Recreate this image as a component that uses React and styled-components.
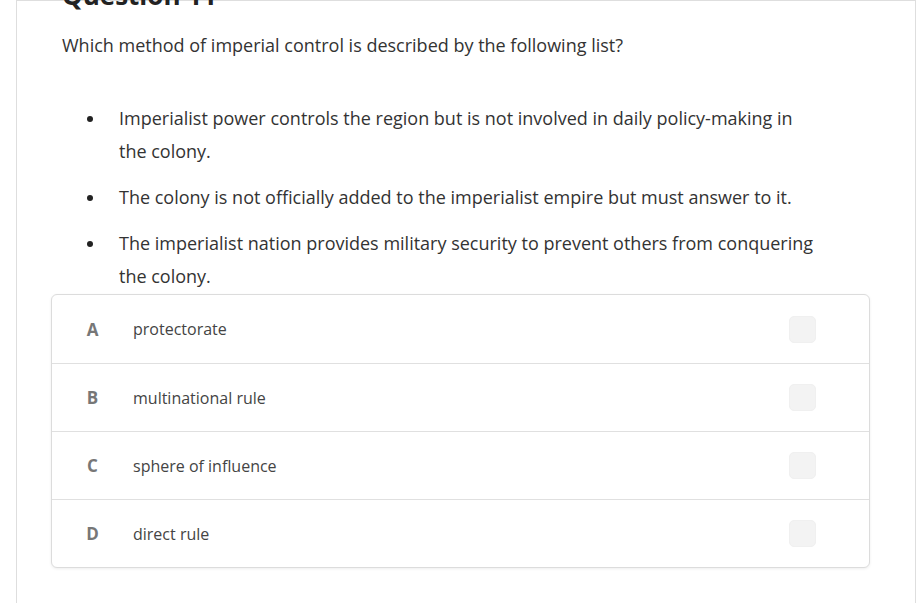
import React from "react";
import styled, { createGlobalStyle } from "styled-components";

const Global = createGlobalStyle`
  html, body { margin: 0; padding: 0; background: #fff; overflow: hidden; }
  body { font-family: "Open Sans", "Noto Sans", sans-serif; color: #333; }
  * { box-sizing: border-box; }
`;

const Page = styled.div`
  padding-left: 16px;
  height: 603px;
  overflow: hidden;
`;

const Card = styled.div`
  width: 900px;
  border: 1px solid #dedede;
  border-bottom: none;
  background: #fff;
  padding: 0 0 80px 0;
`;

const Heading = styled.h2`
  margin: -22px 0 0 45px;
  font-size: 26px;
  line-height: 32px;
  font-weight: 700;
  color: #222;
`;

const Prompt = styled.p`
  margin: 21px 0 0 45px;
  font-size: 18px;
  line-height: 26px;
  color: #333;
`;

const List = styled.ul`
  list-style: none;
  margin: 44px 0 0 45px;
  padding: 0;
  width: 758px;
`;

const Item = styled.li`
  display: flex;
  font-size: 18px;
  line-height: 33px;
  color: #333;
  margin-bottom: 13px;
  &:last-child { margin-bottom: 0; }
`;

const Bullet = styled.span`
  flex: 0 0 57px;
  position: relative;
  &::before {
    content: "";
    position: absolute;
    left: 25px;
    top: 14px;
    width: 6px;
    height: 6px;
    border-radius: 50%;
    background: #222;
  }
`;

const ItemText = styled.span`
  flex: 1;
`;

const Options = styled.div`
  margin: 1px 0 0 34px;
  width: 819px;
  border: 1px solid #dcdcdc;
  border-radius: 6px;
  box-shadow: 0 1px 3px rgba(0, 0, 0, 0.07);
  background: #fff;
`;

const Row = styled.div`
  display: flex;
  align-items: center;
  height: 68px;
  border-top: ${(p) => (p.$first ? "none" : "1px solid #e0e0e0")};
`;

const Letter = styled.span`
  flex: 0 0 81px;
  text-align: center;
  font-weight: 700;
  font-size: 17px;
  color: #777;
`;

const Label = styled.span`
  flex: 1;
  font-size: 16px;
  color: #444;
`;

const Check = styled.span`
  flex: 0 0 27px;
  height: 27px;
  margin-right: 53px;
  border-radius: 5px;
  background: #f3f3f3;
  border: 1px solid #f0f0f0;
`;

const bullets = [
  "Imperialist power controls the region but is not involved in daily policy-making in the colony.",
  "The colony is not officially added to the imperialist empire but must answer to it.",
  "The imperialist nation provides military security to prevent others from conquering the colony.",
];

const options = [
  ["A", "protectorate"],
  ["B", "multinational rule"],
  ["C", "sphere of influence"],
  ["D", "direct rule"],
];

export default function App() {
  return (
    <>
      <Global />
      <Page>
        <Card>
          <Heading>Question 11</Heading>
          <Prompt>Which method of imperial control is described by the following list?</Prompt>
          <List>
            {bullets.map((b) => (
              <Item key={b}>
                <Bullet />
                <ItemText>{b}</ItemText>
              </Item>
            ))}
          </List>
          <Options>
            {options.map(([l, t], i) => (
              <Row key={l} $first={i === 0}>
                <Letter>{l}</Letter>
                <Label>{t}</Label>
                <Check />
              </Row>
            ))}
          </Options>
        </Card>
      </Page>
    </>
  );
}
